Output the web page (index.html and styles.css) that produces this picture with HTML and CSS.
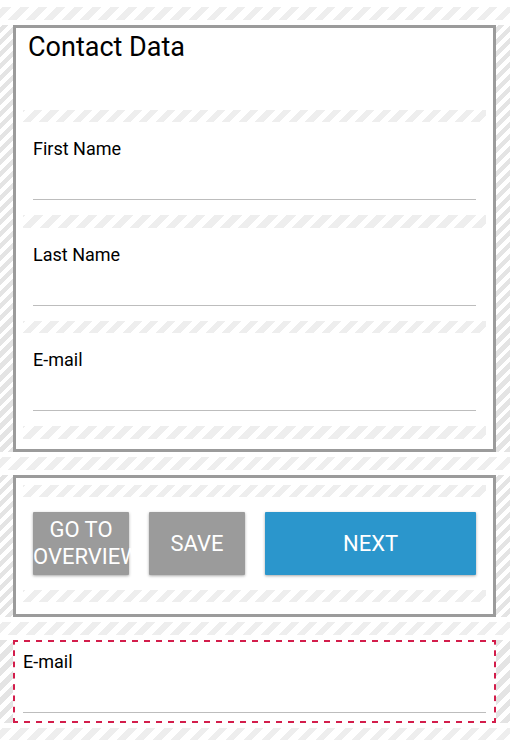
FILE: index.html
```html
<!DOCTYPE html>
<html lang="en">
  <head>
    <meta charset="UTF-8" />
    <meta name="viewport" content="width=device-width, initial-scale=1.0" />
    <title>Contact Data</title>
    <link rel="stylesheet" href="styles.css">
  </head>
  <body>
    <main>
      <div class="drop-zone drop-first"></div>

      <div class="row">
        <div class="drop-side"></div>
        <section class="group group-contact">
          <h1>Contact Data</h1>
          <div class="drop-zone drop-thin"></div>
          <div class="field">
            <label for="firstName">First Name</label>
            <input type="text" id="firstName" />
          </div>
          <div class="drop-zone"></div>
          <div class="field">
            <label for="lastName">Last Name</label>
            <input type="text" id="lastName" />
          </div>
          <div class="drop-zone drop-thin"></div>
          <div class="field">
            <label for="email">E-mail</label>
            <input type="text" id="email" />
          </div>
          <div class="drop-zone"></div>
        </section>
        <div class="drop-side drop-right"></div>
      </div>

      <div class="drop-zone drop-between"></div>

      <div class="row">
        <div class="drop-side"></div>
        <section class="group group-actions">
          <div class="drop-zone drop-thin"></div>
          <div class="actions">
            <button type="button" class="two-lines">GO TO OVERVIEW</button>
            <button type="button">SAVE</button>
            <button type="button" class="primary">NEXT</button>
          </div>
          <div class="drop-zone drop-thin"></div>
        </section>
        <div class="drop-side drop-right"></div>
      </div>

      <div class="drop-zone drop-between"></div>

      <div class="row">
        <div class="drop-side drop-side-wide"></div>
        <section class="selected">
          <label for="emailCopy">E-mail</label>
          <input type="text" id="emailCopy" />
        </section>
        <div class="drop-side drop-side-wide drop-right"></div>
      </div>

      <div class="drop-zone drop-last"></div>
    </main>
  </body>
</html>
```

FILE: styles.css
```css
* {
  box-sizing: border-box;
  margin: 0;
  padding: 0;
}

body {
  font-family: Roboto, Arial, sans-serif;
  background-color: #fff;
  color: #000;
  padding-top: 7px;
  overflow: hidden;
}

/* Striped drop zones */
.drop-zone {
  height: 13px;
  background: repeating-linear-gradient(
    135deg,
    #fff 0,
    #fff 2.1px,
    #eee 2.1px,
    #eee 8.4px,
    #fff 8.4px,
    #fff 12.73px
  );
}

.group .drop-zone {
  background: repeating-linear-gradient(
    135deg,
    #eee 0,
    #eee 2.1px,
    #fff 2.1px,
    #fff 8.4px,
    #eee 8.4px,
    #eee 12.73px
  );
}

.group .drop-thin {
  height: 12px;
  background: repeating-linear-gradient(
    135deg,
    #eee 0,
    #eee 2.1px,
    #fff 2.1px,
    #fff 8px,
    #eee 8px,
    #eee 11.75px
  );
}

.drop-first {
  margin-bottom: 5px;
}

.drop-between {
  margin: 5px 0;
}

.drop-last {
  height: 12px;
  margin-top: 5px;
}

.drop-side {
  width: 13px;
  background: repeating-linear-gradient(
    135deg,
    #fff 0,
    #fff 1.5px,
    #e4e4e4 1.5px,
    #e4e4e4 6px,
    #fff 6px,
    #fff 8.5px
  );
}

.drop-side-wide {
  background: repeating-linear-gradient(
    135deg,
    #e4e4e4 0,
    #e4e4e4 5.5px,
    #fff 5.5px,
    #fff 10.2px
  );
}

.drop-right {
  width: 14px;
}

.row {
  display: flex;
}

/* Groups */
.group {
  flex: 1;
  min-width: 0;
  border: 3px solid #9b9b9b;
  padding: 0 7px;
}

.group-contact {
  height: 427px;
}

.group-actions {
  height: 142px;
  padding-top: 7px;
}

h1 {
  height: 82px;
  padding: 3px 0 0 5px;
  font-size: 27px;
  font-weight: 400;
  line-height: 32px;
}

.field {
  height: 93px;
  padding: 15px 10px;
}

label {
  display: block;
  font-size: 18px;
  line-height: 24px;
}

input {
  display: block;
  width: 100%;
  height: 39px;
  border: none;
  border-bottom: 1px solid #bdbdbd;
  background: transparent;
  font: inherit;
  outline: none;
}

/* Buttons */
.actions {
  display: flex;
  gap: 20px;
  padding: 15px 10px;
}

button {
  width: 96px;
  height: 63px;
  border: none;
  border-radius: 1px;
  background-color: #9b9b9b;
  color: #fff;
  font-family: inherit;
  font-size: 22px;
  line-height: 27px;
  box-shadow: 0 1px 3px rgba(0, 0, 0, 0.35);
}

.two-lines {
  padding-bottom: 2px;
}

.primary {
  flex: 1;
  background-color: #2b96cc;
}

/* Selected field, dashes drawn on the four edges */
.selected {
  flex: 1;
  height: 83px;
  padding: 10px;
  background:
    linear-gradient(90deg, #d31d4b 6px, transparent 6px) -1px 0 / 12px 2px repeat-x,
    linear-gradient(90deg, #d31d4b 6px, transparent 6px) -1px 100% / 12px 2px repeat-x,
    linear-gradient(#d31d4b 6px, transparent 6px) 0 -1px / 2px 11.3px repeat-y,
    linear-gradient(#d31d4b 6px, transparent 6px) 100% -1px / 2px 11.3px repeat-y;
}
```
